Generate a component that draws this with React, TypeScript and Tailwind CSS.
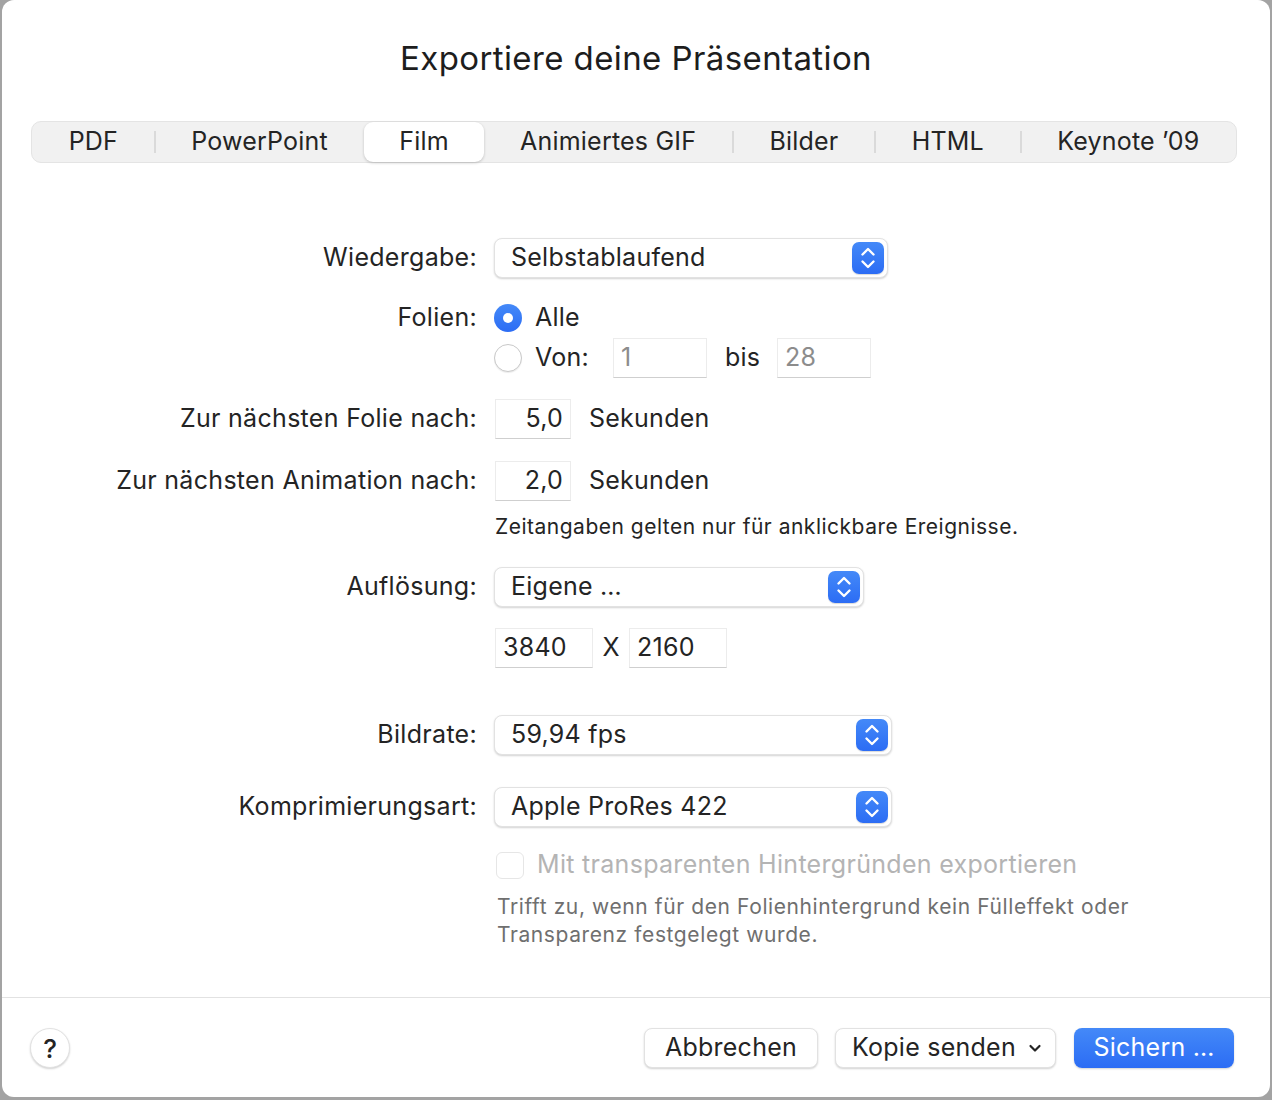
import React from "react";

const font = { fontFamily: "Inter, 'Noto Sans', sans-serif" };

function Stepper() {
  return (
    <div className="w-[32px] h-[32px] rounded-[7px] bg-gradient-to-b from-[#4489f8] to-[#2c6cf4] flex items-center justify-center shadow-[0_1px_1px_rgba(0,0,0,0.15)]">
      <svg width="16" height="26" viewBox="0 0 16 26" fill="none" stroke="white" strokeWidth="2.4" strokeLinecap="round" strokeLinejoin="round">
        <path d="M2.5 9.5 L8 4 L13.5 9.5" />
        <path d="M2.5 16.5 L8 22 L13.5 16.5" />
      </svg>
    </div>
  );
}

function Popup({ value, width }: { value: string; width: string }) {
  return (
    <div className={`${width} h-[40px] bg-white rounded-[8px] border border-[#e2e2e2] shadow-[0_1px_2px_rgba(0,0,0,0.18)] flex items-center justify-between pl-[16px] pr-[3px]`}>
      <span className="text-[25px] tracking-[0.25px] text-[#242424]">{value}</span>
      <Stepper />
    </div>
  );
}

function Field({ value, width, gray, right }: { value: string; width: string; gray?: boolean; right?: boolean }) {
  return (
    <div className={`${width} h-[40px] bg-white border border-[#ececec] border-b-[#cfcfcf] flex items-center ${right ? "justify-end pr-[7px]" : "pl-[7px]"}`}>
      <span className={`text-[25px] tracking-[0.25px] ${gray ? "text-[#8c8c8c]" : "text-[#242424]"}`}>{value}</span>
    </div>
  );
}

function Row({ label, children, mt, h = "h-[40px]" }: { label?: string; children: React.ReactNode; mt: string; h?: string }) {
  return (
    <div className={`flex items-center ${h} ${mt}`}>
      <div className="w-[475px] text-right text-[25px] tracking-[0.3px] text-[#242424] shrink-0">{label}</div>
      <div className="ml-[17px] flex items-center">{children}</div>
    </div>
  );
}

const tabs = ["PDF", "PowerPoint", "Film", "Animiertes GIF", "Bilder", "HTML", "Keynote ’09"];

export default function App() {
  return (
    <div className="w-[1272px] h-[1100px] bg-[#a3a3a3] overflow-hidden" style={font}>
      <div className="ml-[2px] w-[1268px] h-[1097px] bg-white rounded-[12px] flex flex-col">
        <div className="pt-[38px] h-[78px] text-center text-[33px] leading-[40px] tracking-[0.4px] text-[#1d1d1d]">
          Exportiere deine Präsentation
        </div>
        <div className="mt-[43px] ml-[29px] w-[1206px] h-[42px] rounded-[10px] bg-[#f1f1f1] border border-[#e4e4e4] flex items-center px-[1px]">
          {tabs.map((t, i) => {
            const active = t === "Film";
            const showSep = i > 0 && !active && tabs[i - 1] !== "Film";
            return (
              <React.Fragment key={t}>
                {showSep && <div className="w-[2px] h-[22px] bg-[#dadada] shrink-0" />}
                <div
                  className={`flex-auto h-[40px] flex items-center justify-center text-[25px] tracking-[0.2px] text-[#242424] ${
                    active ? "bg-white rounded-[9px] shadow-[0_1px_3px_rgba(0,0,0,0.2)]" : ""
                  }`}
                >
                  {t}
                </div>
              </React.Fragment>
            );
          })}
        </div>

        <Row label="Wiedergabe:" mt="mt-[75px]">
          <Popup value="Selbstablaufend" width="w-[394px]" />
        </Row>
        <Row label="Folien:" mt="mt-[20px]">
          <div className="w-[28px] h-[28px] rounded-full bg-gradient-to-b from-[#4489f8] to-[#2c6cf4] flex items-center justify-center">
            <div className="w-[10px] h-[10px] rounded-full bg-white" />
          </div>
          <span className="ml-[13px] text-[25px] tracking-[0.25px] text-[#242424]">Alle</span>
        </Row>
        <Row mt="mt-[0px]">
          <div className="w-[28px] h-[28px] rounded-full bg-white border border-[#c9c9c9] shadow-[0_1px_1px_rgba(0,0,0,0.08)]" />
          <span className="ml-[13px] w-[78px] text-[25px] tracking-[0.25px] text-[#242424]">Von:</span>
          <Field value="1" width="w-[94px]" gray />
          <span className="ml-[18px] w-[52px] text-[25px] tracking-[0.25px] text-[#242424]">bis</span>
          <Field value="28" width="w-[94px]" gray />
        </Row>
        <Row label="Zur nächsten Folie nach:" mt="mt-[21px]">
          <div className="ml-[1px] flex items-center">
            <Field value="5,0" width="w-[76px]" right />
            <span className="ml-[18px] text-[25px] tracking-[0.25px] text-[#242424]">Sekunden</span>
          </div>
        </Row>
        <Row label="Zur nächsten Animation nach:" mt="mt-[22px]">
          <div className="ml-[1px] flex items-center">
            <Field value="2,0" width="w-[76px]" right />
            <span className="ml-[18px] text-[25px] tracking-[0.25px] text-[#242424]">Sekunden</span>
          </div>
        </Row>
        <Row mt="mt-[14px]" h="h-[24px]">
          <span className="ml-[1px] text-[21px] leading-[24px] tracking-[0.5px] text-[#242424] whitespace-nowrap">
            Zeitangaben gelten nur für anklickbare Ereignisse.
          </span>
        </Row>
        <Row label="Auflösung:" mt="mt-[28px]">
          <Popup value="Eigene …" width="w-[370px]" />
        </Row>
        <Row mt="mt-[21px]">
          <div className="ml-[1px] flex items-center">
            <Field value="3840" width="w-[98px]" />
            <span className="w-[36px] text-center text-[25px] text-[#242424]">X</span>
            <Field value="2160" width="w-[98px]" />
          </div>
        </Row>
        <Row label="Bildrate:" mt="mt-[47px]">
          <Popup value="59,94 fps" width="w-[398px]" />
        </Row>
        <Row label="Komprimierungsart:" mt="mt-[32px]">
          <Popup value="Apple ProRes 422" width="w-[398px]" />
        </Row>
        <Row mt="mt-[24px]" h="h-[28px]">
          <div className="ml-[2px] w-[28px] h-[27px] rounded-[6px] bg-white border border-[#e6e6e6]" />
          <span className="ml-[13px] text-[25px] tracking-[0.3px] text-[#b4b4b4] whitespace-nowrap">
            Mit transparenten Hintergründen exportieren
          </span>
        </Row>
        <Row mt="mt-[14px]" h="h-[56px]">
          <div className="ml-[3px] w-[680px] text-[21px] leading-[28px] tracking-[0.6px] text-[#6f6f6f]">
            Trifft zu, wenn für den Folienhintergrund kein Fülleffekt oder
            <br />
            Transparenz festgelegt wurde.
          </div>
        </Row>

        <div className="mt-[48px] h-[1px] bg-[#e2e2e2]" />

        <div className="mt-[30px] flex items-center pl-[28px] pr-[36px]">
          <div className="w-[40px] h-[40px] rounded-full bg-white border border-[#e2e2e2] shadow-[0_1px_2px_rgba(0,0,0,0.18)] flex items-center justify-center text-[26px] font-medium text-[#242424]">
            ?
          </div>
          <div className="flex-1" />
          <div className="w-[174px] h-[40px] rounded-[8px] bg-white border border-[#e2e2e2] shadow-[0_1px_2px_rgba(0,0,0,0.18)] flex items-center justify-center text-[25px] tracking-[0.25px] text-[#242424]">
            Abbrechen
          </div>
          <div className="ml-[17px] w-[221px] h-[40px] rounded-[8px] bg-white border border-[#e2e2e2] shadow-[0_1px_2px_rgba(0,0,0,0.18)] flex items-center pl-[16px] text-[25px] tracking-[0.25px] text-[#242424]">
            Kopie senden
            <svg className="ml-[12px]" width="14" height="10" viewBox="0 0 14 10" fill="none" stroke="#242424" strokeWidth="2.2" strokeLinecap="round" strokeLinejoin="round">
              <path d="M2.5 3 L7 7.5 L11.5 3" />
            </svg>
          </div>
          <div className="ml-[18px] w-[160px] h-[40px] rounded-[8px] bg-gradient-to-b from-[#4489f8] to-[#2c6cf4] shadow-[0_1px_2px_rgba(0,0,0,0.18)] flex items-center justify-center text-[25px] tracking-[0.25px] text-white">
            Sichern …
          </div>
        </div>
      </div>
    </div>
  );
}
